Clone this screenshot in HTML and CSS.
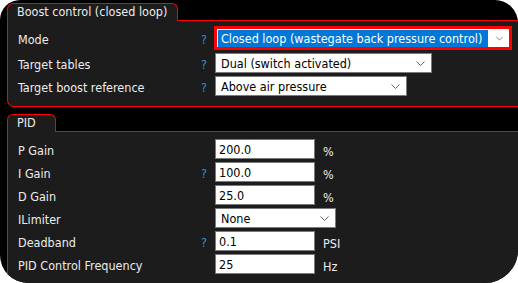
FILE: index.html
```html
<!DOCTYPE html>
<html lang="en">

<head>
    <meta charset="UTF-8">
    <title>Boost control</title>
    <link rel="stylesheet" href="styles.css">
</head>

<body>
    <div class="window">

        <section class="group">
            <div class="group-head">
                <div class="tab tab-wide">Boost control (closed loop)</div>
                <div class="tab-line"></div>
            </div>
            <div class="group-body">
                <div class="row row-mode">
                    <span class="label">Mode</span>
                    <span class="help">?</span>
                    <div class="select select-focus">
                        <span class="value highlighted">Closed loop (wastegate back pressure control)</span>
                        <svg class="chev" viewBox="0 0 9 5" width="9" height="5"><polyline points="0.5,0.5 4.5,4.5 8.5,0.5" /></svg>
                    </div>
                </div>
                <div class="row">
                    <span class="label">Target tables</span>
                    <span class="help">?</span>
                    <div class="select w-tables">
                        <span class="value">Dual (switch activated)</span>
                        <svg class="chev" viewBox="0 0 9 5" width="9" height="5"><polyline points="0.5,0.5 4.5,4.5 8.5,0.5" /></svg>
                    </div>
                </div>
                <div class="row">
                    <span class="label">Target boost reference</span>
                    <span class="help">?</span>
                    <div class="select w-ref">
                        <span class="value">Above air pressure</span>
                        <svg class="chev" viewBox="0 0 9 5" width="9" height="5"><polyline points="0.5,0.5 4.5,4.5 8.5,0.5" /></svg>
                    </div>
                </div>
            </div>
        </section>

        <section class="group group-pid">
            <div class="group-head">
                <div class="tab tab-pid">PID</div>
                <div class="tab-line"></div>
            </div>
            <div class="group-body">
                <div class="row">
                    <span class="label">P Gain</span>
                    <span class="help"></span>
                    <div class="field">200.0</div>
                    <span class="unit">%</span>
                </div>
                <div class="row">
                    <span class="label">I Gain</span>
                    <span class="help">?</span>
                    <div class="field">100.0</div>
                    <span class="unit">%</span>
                </div>
                <div class="row">
                    <span class="label">D Gain</span>
                    <span class="help"></span>
                    <div class="field">25.0</div>
                    <span class="unit">%</span>
                </div>
                <div class="row">
                    <span class="label">ILimiter</span>
                    <span class="help"></span>
                    <div class="select w-limiter">
                        <span class="value">None</span>
                        <svg class="chev" viewBox="0 0 9 5" width="9" height="5"><polyline points="0.5,0.5 4.5,4.5 8.5,0.5" /></svg>
                    </div>
                </div>
                <div class="row">
                    <span class="label">Deadband</span>
                    <span class="help">?</span>
                    <div class="field">0.1</div>
                    <span class="unit">PSI</span>
                </div>
                <div class="row">
                    <span class="label">PID Control Frequency</span>
                    <span class="help"></span>
                    <div class="field">25</div>
                    <span class="unit">Hz</span>
                </div>
            </div>
        </section>

    </div>
</body>

</html>
```

FILE: styles.css
```css
*,
*::before,
*::after {
    box-sizing: border-box;
}

body {
    margin: 0;
    background: #fff;
    font-family: "DejaVu Sans Condensed", "DejaVu Sans", sans-serif;
    font-size: 12.5px;
    white-space: nowrap;
}

.window {
    width: 518px;
    height: 283px;
    background: #000;
    overflow: hidden;
    border-radius: 20px 23px 33px 28px;
    padding-top: 3px;
    padding-left: 7px;
}

.group {
    margin-right: -20px;
    color: #ececec;
}

.group-pid {
    margin-top: 7px;
}

.group-head {
    display: flex;
    height: 18px;
}

.tab {
    background: #1c1c1c;
    border: 1px solid #f00;
    border-bottom: 0;
    border-radius: 6px 6px 0 0;
    padding-left: 9px;
    line-height: 16px;
    height: 18px;
}

.tab-wide {
    width: 171px;
}

.tab-pid {
    width: 49px;
}

.tab-line {
    flex: 1;
    border-bottom: 1px solid #f00;
}

.group-body {
    background: #1c1c1c;
    border: 1px solid #f00;
    border-top: 0;
    border-radius: 0 0 0 7px;
    padding: 5px 0 10px 10px;
    display: flex;
    flex-direction: column;
    gap: 3px;
}

.group-pid .group-body {
    padding-top: 7px;
    height: 200px;
}

.row {
    display: flex;
    align-items: center;
    height: 20px;
}

.row-mode {
    height: 24px;
}

.label {
    width: 181px;
    padding-top: 2px;
}

.help {
    width: 16px;
    color: #2a93dc;
    padding-left: 2px;
    padding-top: 2px;
}

.select,
.field {
    background: #fff;
    color: #000;
    border: 1px solid #7a7a7a;
    height: 20px;
    display: flex;
    align-items: center;
}

.select .value {
    flex: 1;
    padding-left: 5px;
    overflow: hidden;
}

.chev {
    margin-right: 6px;
    fill: none;
    stroke: #606060;
    stroke-width: 1;
}

.select-focus {
    width: 298px;
    height: 24px;
    margin-left: -1px;
    border: 3px solid #f00;
    padding-left: 1px;
    align-items: stretch;
}

.select-focus .value {
    flex: 0 0 270px;
    margin-top: 1px;
    background: #0078d7;
    color: #fff;
    padding-left: 3px;
    line-height: 17px;
}

.select-focus .chev {
    align-self: center;
    margin-left: 8px;
}

.w-tables {
    width: 217px;
}

.w-ref {
    width: 192px;
}

.w-limiter {
    width: 121px;
}

.field {
    width: 100px;
    padding-left: 3px;
}

.unit {
    margin-left: 8px;
    padding-top: 4px;
}
```
